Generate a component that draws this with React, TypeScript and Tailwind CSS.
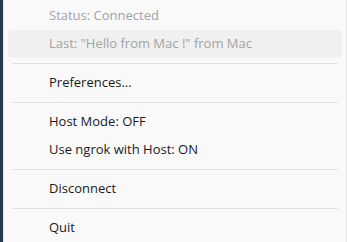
export default function App() {
  const Sep = () => <div className="mx-[8px] my-[5px] h-px bg-[#e0e0e0]" />

  const Item = ({ label, disabled, active }: { label: string; disabled?: boolean; active?: boolean }) => (
    <div
      className={`mx-[4px] flex h-7 items-center rounded-[4px] pl-[41px] ${active ? 'bg-[#f0f0f0]' : ''} ${
        disabled ? 'text-[#a3a3a3]' : 'text-[#1b1b1b]'
      }`}
    >
      {label}
    </div>
  )

  return (
    <div
      className="flex h-[242px] w-[347px] overflow-hidden bg-[#f9f9f9] text-[13px]"
      style={{ fontFamily: '"Open Sans", "Noto Sans", sans-serif' }}
    >
      <div className="w-[3px] bg-[#26394d]" />
      <div className="flex-1 border-l border-r border-[#e3e3e3] pt-[2px]">
        <Item label="Status: Connected" disabled />
        <Item label={'Last: "Hello from Mac !" from Mac'} disabled active />
        <Sep />
        <Item label="Preferences..." />
        <Sep />
        <Item label="Host Mode: OFF" />
        <Item label="Use ngrok with Host: ON" />
        <Sep />
        <Item label="Disconnect" />
        <Sep />
        <Item label="Quit" />
      </div>
    </div>
  )
}
